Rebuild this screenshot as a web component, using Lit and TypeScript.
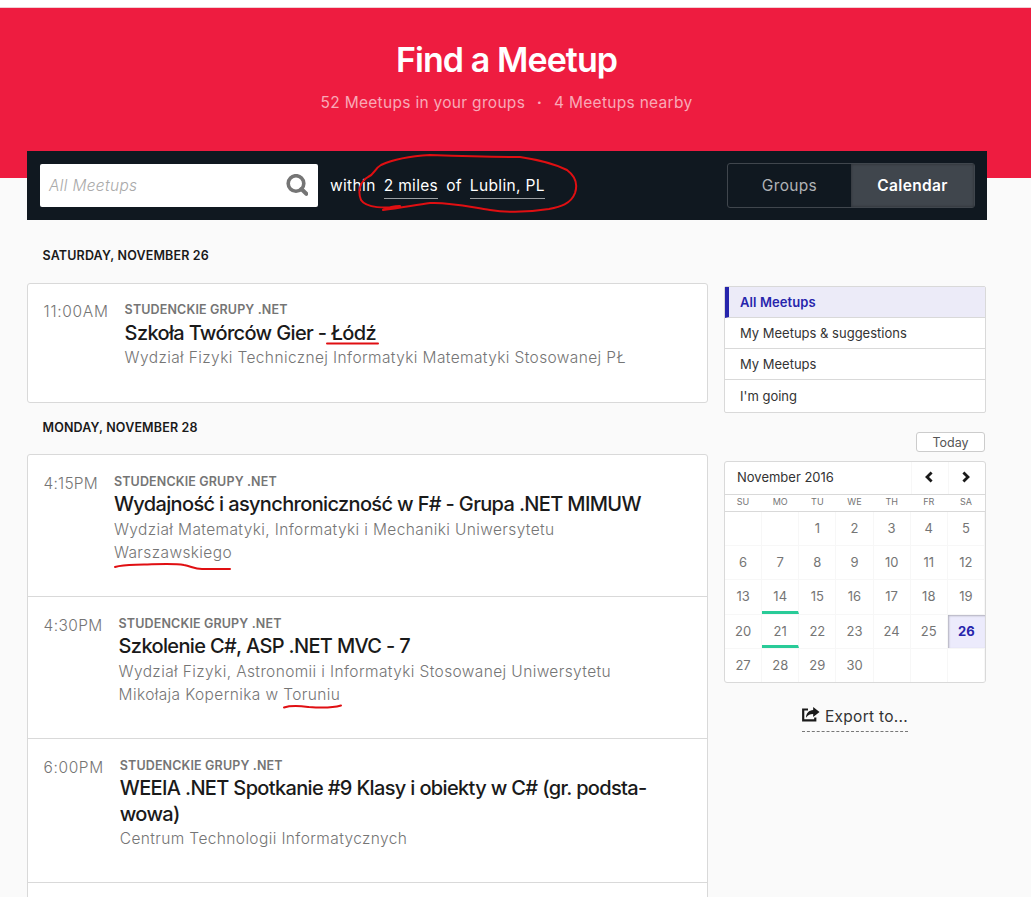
import { LitElement, html, css } from 'lit';
import { customElement, property } from 'lit/decorators.js';
import { classMap } from 'lit/directives/class-map.js';
import { styleMap } from 'lit/directives/style-map.js';

interface Meetup {
	time: string;
	tracking: number;
	group: string;
	title: string;
	venue: string;
}

interface Day {
	label: string;
	meetups: Meetup[];
}

const GROUP = 'Studenckie Grupy .NET';

const DAYS: Day[] = [
	{
		label: 'Saturday, November 26',
		meetups: [
			{ time: '11:00AM', tracking: 0.7, group: GROUP, title: 'Szkoła Twórców Gier - Łódź', venue: 'Wydział Fizyki Technicznej Informatyki Matematyki Stosowanej PŁ' },
		],
	},
	{
		label: 'Monday, November 28',
		meetups: [
			{ time: '4:15PM', tracking: 0.2, group: GROUP, title: 'Wydajność i asynchroniczność w F# - Grupa .NET MIMUW', venue: 'Wydział Matematyki, Informatyki i Mechaniki Uniwersytetu\nWarszawskiego' },
			{ time: '4:30PM', tracking: 0.37, group: GROUP, title: 'Szkolenie C#, ASP .NET MVC - 7', venue: 'Wydział Fizyki, Astronomii i Informatyki Stosowanej Uniwersytetu\nMikołaja Kopernika w Toruniu' },
			{ time: '6:00PM', tracking: 0.6, group: GROUP, title: 'WEEIA .NET Spotkanie #9 Klasy i obiekty w C# (gr. podsta-\nwowa)', venue: 'Centrum Technologii Informatycznych' },
			{ time: '', tracking: 0, group: '', title: '', venue: '' },
		],
	},
];

@customElement('meetup-row')
export class MeetupRow extends LitElement {

	@property({ attribute: false })
	meetup!: Meetup;

	static get styles() {
		return css`
			:host {
				display: block;
			}

			.row {
				display: flex;
				gap: 16px;
				padding: 16.4px 16px 31.8px 15.6px;
				color: #757575;
			}

			.time {
				font-size: 15.5px;
				font-weight: 300;
				line-height: 24px;
			}

			.group {
				font-size: 12.5px;
				font-weight: 600;
				line-height: 20.4px;
				letter-spacing: 0.14px;
				text-transform: uppercase;
			}

			.title {
				color: #1a1a1a;
				font-size: 20px;
				font-weight: 500;
				line-height: 25.6px;
				letter-spacing: -0.65px;
				white-space: pre;
			}

			.venue {
				font-size: 15.5px;
				font-weight: 300;
				line-height: 23.4px;
				letter-spacing: 0.38px;
				white-space: pre;
			}
		`;
	}

	render() {
		const m = this.meetup;
		return html`
			<div class="row">
				<div class="time" style=${styleMap({ letterSpacing: `${m.tracking}px` })}>${m.time}</div>
				<div>
					<div class="group">${m.group}</div>
					<div class="title">${m.title}</div>
					<div class="venue">${m.venue}</div>
				</div>
			</div>
		`;
	}
}

@customElement('month-calendar')
export class MonthCalendar extends LitElement {

	@property()
	month = '';

	@property({ type: Number })
	offset = 0;

	@property({ type: Number })
	days = 30;

	@property({ type: Number })
	selected = 0;

	@property({ attribute: false })
	marked: number[] = [];

	static get styles() {
		return css`
			:host {
				display: block;
				box-sizing: border-box;
				height: 222px;
				border: 1px solid #d9d9d9;
				border-radius: 3px;
				background: white;
				overflow: hidden;
			}

			.head {
				display: grid;
				grid-template-columns: 5fr 1fr 1fr;
				height: 32px;
				border-bottom: 1px solid #d9d9d9;
				line-height: 31px;
				font-size: 13px;
				color: #333;
			}

			.month {
				padding-left: 12px;
			}

			.arrow {
				display: grid;
				place-items: center;
				border-left: 1px solid #f7f7f7;
				padding: 0 1px 3px 0;
			}

			.week {
				display: grid;
				grid-template-columns: repeat(7, 1fr);
			}

			.names {
				height: 16px;
				border-bottom: 1px solid #d9d9d9;
				font-size: 9px;
				line-height: 14px;
				text-align: center;
				color: #757575;
			}

			.names span {
				padding-right: 1px;
			}

			.day {
				box-sizing: border-box;
				height: 34.2px;
				border-right: 1px solid #f7f7f7;
				border-bottom: 1px solid #f7f7f7;
				font-size: 13px;
				line-height: 32px;
				text-align: center;
				color: #757575;
			}

			.marked {
				border-bottom: 3px solid #29cb98;
				box-shadow: 0 1px #f7f7f7;
				height: 33.2px;
			}

			.selected {
				background: #ecebfc;
				box-shadow: inset 1px 1px 2px rgba(0, 0, 0, .25);
				border-right: 0;
				font-weight: 700;
				color: #2725ac;
			}
		`;
	}

	render() {
		const cells = Array.from({ length: 35 }, (_, i) => i - this.offset + 1);
		return html`
			<div class="head">
				<span class="month">${this.month}</span>
				<span class="arrow">
					<svg width="8" height="12" viewBox="0 0 8 12"><path d="M6.6 1.4 2 6l4.6 4.6" fill="none" stroke="#1a1a1a" stroke-width="2.8" /></svg>
				</span>
				<span class="arrow">
					<svg width="8" height="12" viewBox="0 0 8 12"><path d="M1.4 1.4 6 6l-4.6 4.6" fill="none" stroke="#1a1a1a" stroke-width="2.8" /></svg>
				</span>
			</div>
			<div class="week names">
				${['SU', 'MO', 'TU', 'WE', 'TH', 'FR', 'SA'].map(n => html`<span>${n}</span>`)}
			</div>
			<div class="week">
				${cells.map(n => html`
					<span class=${classMap({ day: true, marked: this.marked.includes(n), selected: n === this.selected })}>${n > 0 && n <= this.days ? n : ''}</span>
				`)}
			</div>
		`;
	}
}

@customElement('app-root')
export class AppRoot extends LitElement {

	static get styles() {
		return css`
			:host {
				display: block;
				position: relative;
				height: 897px;
				overflow: hidden;
				background: #fafafa;
				font-family: Inter, "Liberation Sans", sans-serif;
			}

			.banner {
				box-sizing: border-box;
				height: 178px;
				border-top: 7px solid white;
				padding-right: 18px;
				background: #ee1c40;
				box-shadow: inset 0 1px #f0cfd5;
				text-align: center;
				color: white;
			}

			h1 {
				margin: 0;
				padding-top: 31px;
				font-size: 34px;
				font-weight: 600;
				line-height: 44px;
				letter-spacing: -0.92px;
			}

			.counts {
				margin-top: 9px;
				font-size: 15.5px;
				line-height: 24px;
				letter-spacing: 0.3px;
				color: #f9a9b7;
			}

			.dot {
				margin: 0 7px;
				font-weight: 700;
			}

			.page {
				width: 960px;
				margin: -27px 0 0 27px;
			}

			.bar {
				display: flex;
				align-items: center;
				box-sizing: border-box;
				height: 69px;
				padding: 0 12px 0 13px;
				background: #101820;
				position: relative;
				font-size: 15.5px;
				letter-spacing: 0.34px;
				color: white;
			}

			.search {
				display: flex;
				align-items: center;
				justify-content: space-between;
				box-sizing: border-box;
				width: 278px;
				height: 43px;
				padding: 0 10px 0 9px;
				border-radius: 2px;
				background: white;
				font-style: italic;
				font-weight: 300;
				color: #aaa;
			}

			.search svg {
				margin-bottom: 2px;
			}

			.where {
				display: flex;
				gap: 8px;
				flex: 1;
				padding: 2px 0 0 12px;
			}

			.where span {
				line-height: 24px;
				border-bottom: 1px solid transparent;
			}

			.where .pick {
				border-bottom-color: #9b9fa3;
			}

			.toggle {
				display: grid;
				grid-template-columns: 1fr 1fr;
				box-sizing: border-box;
				width: 248px;
				height: 45px;
				border: 1px solid #40464d;
				border-radius: 3px;
				line-height: 43px;
				text-align: center;
				color: #b0b3b6;
			}

			.toggle .on {
				background: #40464d;
				box-shadow: inset 0 0 3px rgba(0, 0, 0, .35);
				font-weight: 600;
				color: white;
			}

			.columns {
				display: flex;
				gap: 16px;
			}

			.list {
				width: 681px;
			}

			h2 {
				margin: 0;
				padding: 26px 0 17px 15.5px;
				font-size: 12.5px;
				font-weight: 600;
				line-height: 20px;
				letter-spacing: 0.16px;
				text-transform: uppercase;
				color: #1a1a1a;
			}

			.day + .day h2 {
				padding: 15.4px 0 16.2px 15.5px;
			}

			.card {
				border: 1px solid #d9d9d9;
				border-radius: 3px;
				background: white;
			}

			meetup-row + meetup-row {
				border-top: 1px solid #d9d9d9;
			}

			.side {
				width: 262px;
				padding-top: 66px;
			}

			.filters {
				box-sizing: border-box;
				height: 127px;
				border: 1px solid #d9d9d9;
				border-radius: 2px;
				background: white;
				font-size: 13px;
				color: #333;
			}

			.filter {
				height: 30px;
				padding-left: 15px;
				border-bottom: 1px solid #d9d9d9;
				line-height: 31px;
			}

			.filter:last-child {
				border-bottom: 0;
				line-height: 33px;
			}

			.filter.on {
				border-left: 4px solid #2725ac;
				padding-left: 11px;
				background: #ecebf8;
				font-weight: 600;
				letter-spacing: 0.1px;
				color: #2725ac;
			}

			.today {
				box-sizing: border-box;
				width: 69px;
				height: 20px;
				margin: 19px 1px 9px auto;
				border: 1px solid #ccc;
				border-radius: 3px;
				background: white;
				font-size: 12.5px;
				line-height: 19px;
				text-align: center;
				color: #555;
			}

			.export {
				display: flex;
				gap: 5px;
				width: 106px;
				height: 28px;
				margin: 20px 0 0 78px;
				border-bottom: 1px dashed #777;
				font-size: 15.5px;
				line-height: 28px;
				letter-spacing: 0.28px;
				color: #333;
				white-space: nowrap;
			}

			.export svg {
				margin-top: 4px;
			}

			.ink {
				position: absolute;
				top: 0;
				left: 0;
				fill: none;
				stroke: #e00f12;
				stroke-width: 2;
				stroke-linecap: round;
				stroke-linejoin: round;
			}
		`;
	}

	render() {
		return html`
			<div class="banner">
				<h1>Find a Meetup</h1>
				<div class="counts">52 Meetups in your groups <span class="dot">·</span> 4 Meetups nearby</div>
			</div>
			<div class="page">
				<div class="bar">
					<div class="search">
						<span>All Meetups</span>
						<svg width="22" height="22" viewBox="0 0 22 22" fill="none" stroke="#757575">
							<circle cx="10" cy="9.5" r="7.8" stroke-width="3.6" />
							<path d="M15.4 15 20.3 19.8" stroke-width="4" stroke-linecap="round" />
						</svg>
					</div>
					<div class="where">
						<span>within</span>
						<span class="pick">2 miles</span>
						<span>of</span>
						<span class="pick">Lublin, PL</span>
					</div>
					<div class="toggle">
						<span>Groups</span>
						<span class="on">Calendar</span>
					</div>
				</div>
				<div class="columns">
					<div class="list">
						${DAYS.map(day => html`
							<div class="day">
								<h2>${day.label}</h2>
								<div class="card">
									${day.meetups.map(m => html`<meetup-row .meetup=${m}></meetup-row>`)}
								</div>
							</div>
						`)}
					</div>
					<div class="side">
						<div class="filters">
							<div class="filter on">All Meetups</div>
							<div class="filter">My Meetups &amp; suggestions</div>
							<div class="filter">My Meetups</div>
							<div class="filter">I'm going</div>
						</div>
						<div class="today">Today</div>
						<month-calendar month="November 2016" offset="2" days="30" selected="26" .marked=${[14, 21]}></month-calendar>
						<div class="export">
							<svg width="18" height="16" viewBox="0 0 18 16">
								<path d="M6 2.5H1.2V13.3H13.3V10.5" fill="none" stroke="#1a1a1a" stroke-width="2.2" />
								<path d="M11.2 0 17.6 5 11.2 10V7C8 7 6 8 4 10.8 4.2 6 7 3.2 11.2 3Z" fill="#1a1a1a" />
							</svg>
							<span>Export to...</span>
						</div>
					</div>
				</div>
			</div>
			<svg class="ink" width="1031" height="897" viewBox="0 0 1031 897">
				<path d="M383 210C389 207 394 206 400 206C386 209 366 208 361 200C357 190 361 181 368 177C375 174 374 169 381 165C394 159 412 156 430 155C456 156 490 157 520 157C540 160 557 165 567 170C575 176 578 184 575 193C571 204 560 207 549 209C530 212 510 213 490 210C470 207 450 202 430 203C415 205 400 208 383 210" />
				<path d="M327 343.500H378" />
				<path d="M115 567C124 564 134 565 144 564.500C160 564 174 563 184 565C191 566 194 569 202 569H230" />
				<path d="M284 707.500C292 705 300 706 309 707C321 708 332 708 341 705.500" />
			</svg>
		`;
	}
}
